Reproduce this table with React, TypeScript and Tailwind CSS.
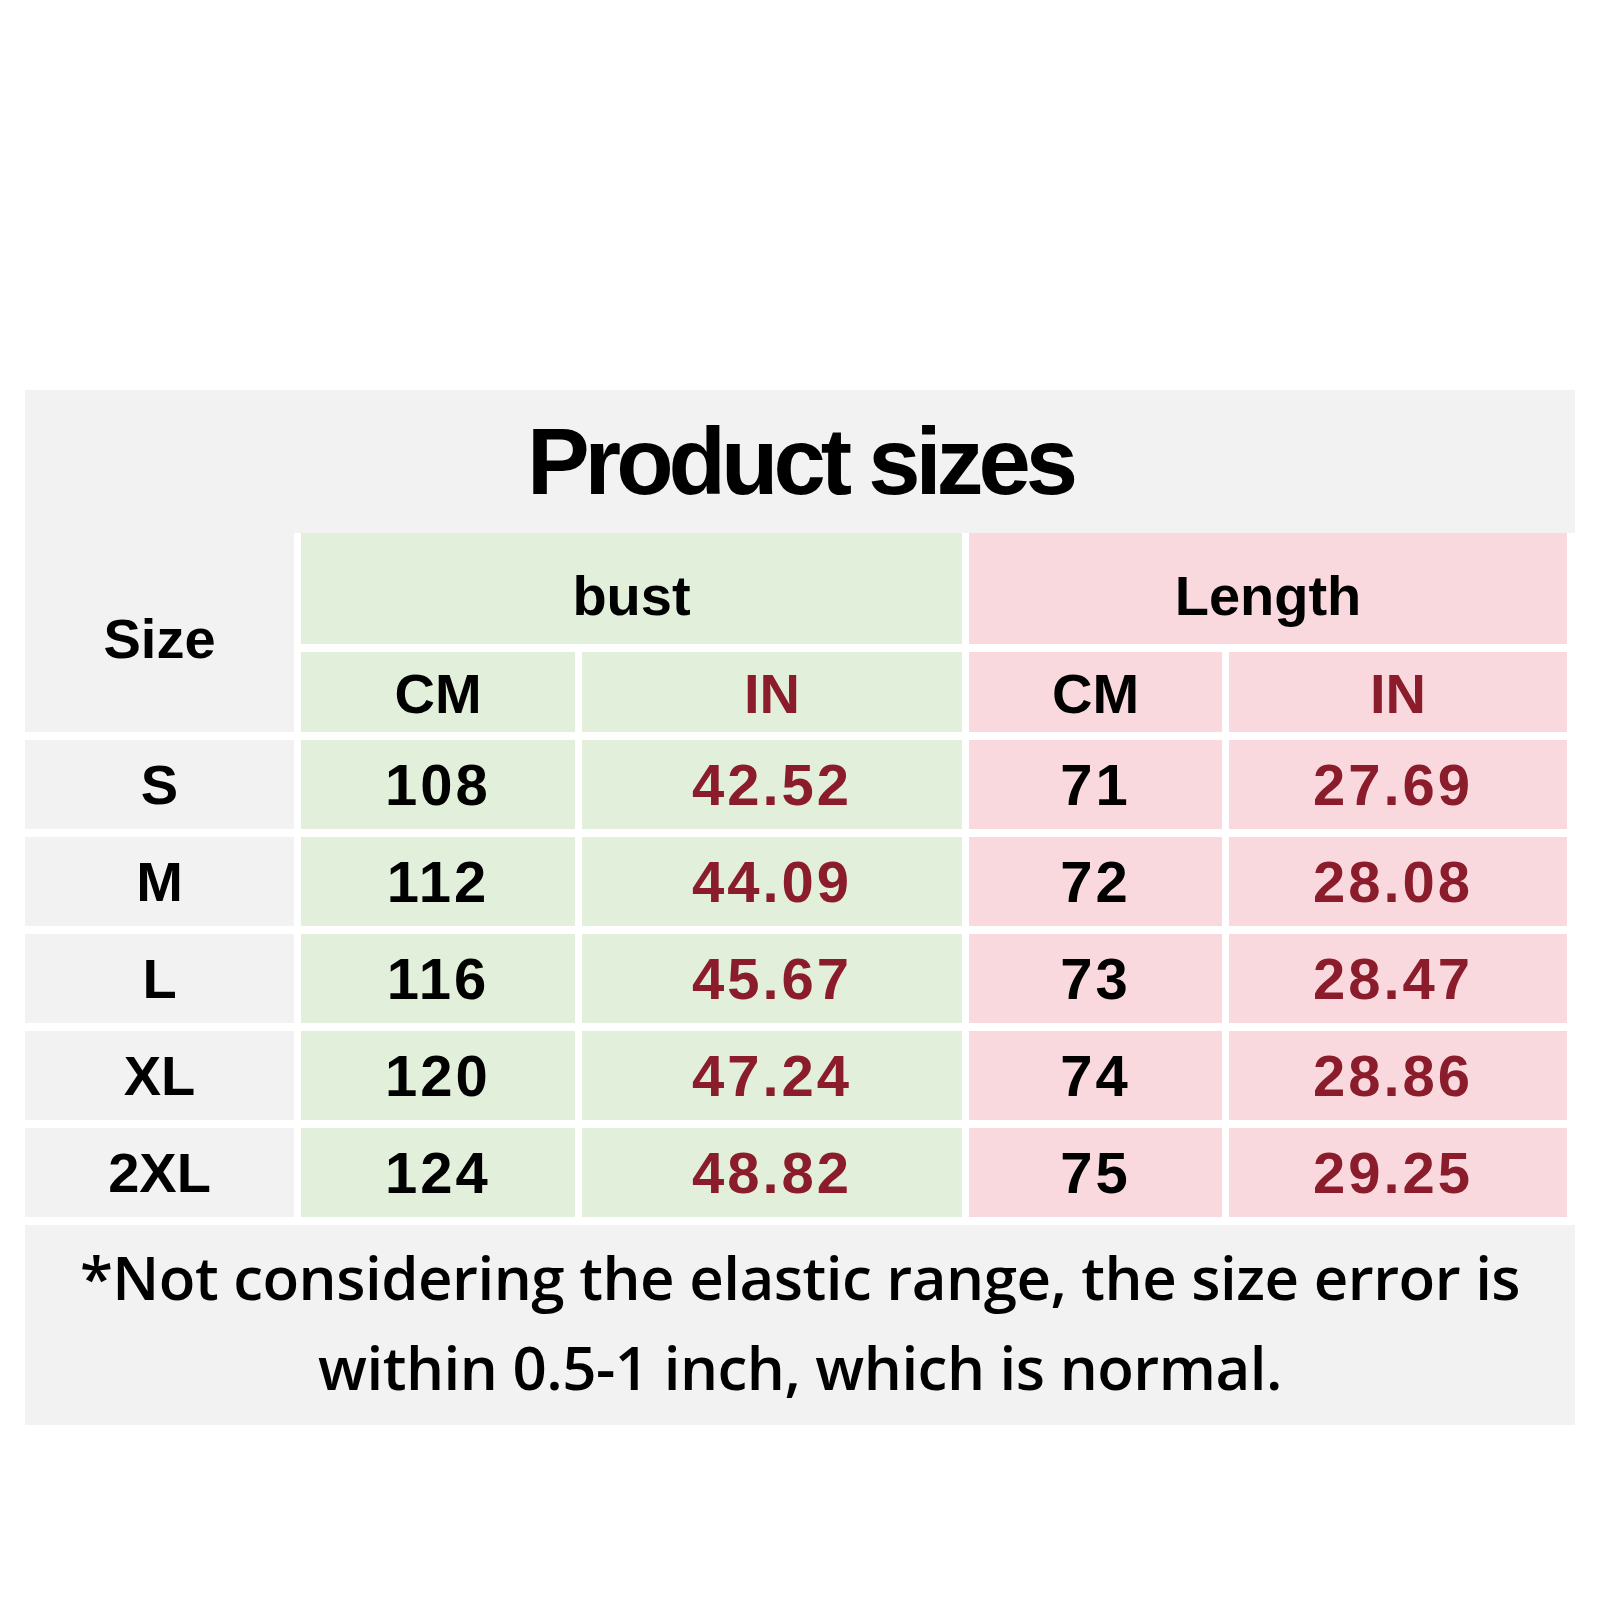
const rows = [
  { size: "S", bustCm: "108", bustIn: "42.52", lenCm: "71", lenIn: "27.69" },
  { size: "M", bustCm: "112", bustIn: "44.09", lenCm: "72", lenIn: "28.08" },
  { size: "L", bustCm: "116", bustIn: "45.67", lenCm: "73", lenIn: "28.47" },
  { size: "XL", bustCm: "120", bustIn: "47.24", lenCm: "74", lenIn: "28.86" },
  { size: "2XL", bustCm: "124", bustIn: "48.82", lenCm: "75", lenIn: "29.25" },
];

const head = "font-['Liberation_Sans',Arial,sans-serif] font-bold text-[56px] leading-none";
const num = "font-['Liberation_Sans',Arial,sans-serif] font-bold text-[58px] leading-none tracking-[3px]";

export default function App() {
  return (
    <div className="min-h-[1600px] w-[1600px] bg-white pl-[25px] pt-[390px]">
      <div className="w-[1550px]">
        <div className="flex h-[143px] items-center justify-center bg-[#f2f2f2]">
          <span className="font-['Liberation_Sans',Arial,sans-serif] text-[94px] font-bold leading-none tracking-[-5px] text-black">
            Product sizes
          </span>
        </div>

        <div className="grid grid-cols-[269px_274px_380px_253px_338px] grid-rows-[111px_80px_repeat(5,89px)] gap-x-[7px] gap-y-[8px] pr-[8px]">
          <div className={`row-span-2 flex items-center justify-center bg-[#f2f2f2] pt-[12px] text-black ${head}`}>Size</div>
          <div className={`col-span-2 flex items-center justify-center bg-[#e2efda] pt-[14px] text-black ${head}`}>bust</div>
          <div className={`col-span-2 flex items-center justify-center bg-[#fad9de] pt-[14px] text-black ${head}`}>Length</div>

          <div className={`flex items-center justify-center bg-[#e2efda] pt-[4px] text-black ${head}`}>CM</div>
          <div className={`flex items-center justify-center bg-[#e2efda] pt-[4px] text-[#8a1c2c] ${head}`}>IN</div>
          <div className={`flex items-center justify-center bg-[#fad9de] pt-[4px] text-black ${head}`}>CM</div>
          <div className={`flex items-center justify-center bg-[#fad9de] pt-[4px] text-[#8a1c2c] ${head}`}>IN</div>

          {rows.map((r) => (
            <Row key={r.size} {...r} />
          ))}
        </div>

        <div className="mt-[8px] flex h-[200px] flex-col items-center justify-center bg-[#f2f2f2] pb-[6px] text-center font-['Open_Sans','Noto_Sans',sans-serif] text-[60px] font-semibold leading-[90px] tracking-[-0.5px] text-black">
          <div>*Not considering the elastic range, the size error is</div>
          <div>within 0.5-1 inch, which is normal.</div>
        </div>
      </div>
    </div>
  );
}

function Row({
  size,
  bustCm,
  bustIn,
  lenCm,
  lenIn,
}: {
  size: string;
  bustCm: string;
  bustIn: string;
  lenCm: string;
  lenIn: string;
}) {
  return (
    <>
      <div className={`flex items-center justify-center bg-[#f2f2f2] text-black ${head}`}>{size}</div>
      <div className={`flex items-center justify-center bg-[#e2efda] text-black ${num}`}>{bustCm}</div>
      <div className={`flex items-center justify-center bg-[#e2efda] text-[#8a1c2c] ${num}`}>{bustIn}</div>
      <div className={`flex items-center justify-center bg-[#fad9de] text-black ${num}`}>{lenCm}</div>
      <div className={`flex items-center justify-center bg-[#fad9de] pr-[10px] text-[#8a1c2c] ${num}`}>{lenIn}</div>
    </>
  );
}
